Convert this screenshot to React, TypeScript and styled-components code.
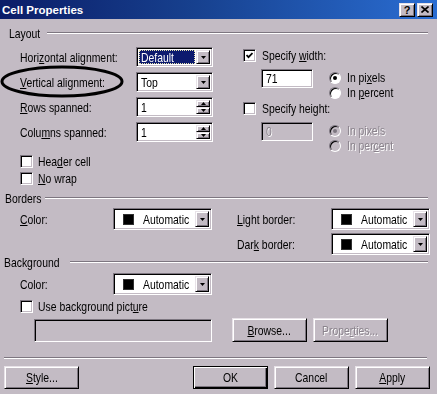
import React from "react";
import styled, { createGlobalStyle, css } from "styled-components";

const BG = "#c3bbc4";
const SHADOW = "#7d7680";
const LIGHT = "#ffffff";
const DIS = "#8a838c";
const FONT = `"Liberation Sans", Arial, sans-serif`;

const Global = createGlobalStyle`
  html, body { margin: 0; padding: 0; background: ${BG}; }
  body { font-family: ${FONT}; font-size: 13px; color: #000; }
  * { box-sizing: border-box; }
`;

const sunken = css`
  border: 1px solid;
  border-color: ${SHADOW} ${LIGHT} ${LIGHT} ${SHADOW};
  box-shadow: inset 1px 1px 0 #000, inset -1px -1px 0 ${BG};
`;

const raised = css`
  background: ${BG};
  border: 1px solid;
  border-color: #e8e2e8 #000 #000 #e8e2e8;
  box-shadow: inset 1px 1px 0 #fff, inset -1px -1px 0 ${SHADOW};
`;

/* The dialog font is a tall, narrow bitmap face: condense the glyphs. */
const Txt = styled.span<{ $disabled?: boolean; $center?: boolean }>`
  display: inline-block;
  white-space: nowrap;
  transform: scaleX(0.8);
  transform-origin: ${(p) => (p.$center ? "center" : "left")} center;
  color: ${(p) => (p.$disabled ? DIS : "inherit")};
  text-shadow: ${(p) => (p.$disabled ? `1px 1px 0 ${LIGHT}` : "none")};
`;

const Window = styled.div`
  position: relative;
  width: 437px;
  height: 394px;
  background: ${BG};
  overflow: hidden;
  display: flex;
  flex-direction: column;
`;

const TitleBar = styled.div`
  height: 19px;
  display: flex;
  align-items: center;
  padding: 0 4px 0 2px;
  background: linear-gradient(90deg, #0b1d68 0%, #17418f 45%, #2a6dd2 100%);
`;

const Title = styled.div`
  flex: 1;
  color: #fff;
  font-family: "Liberation Sans", Arial, sans-serif;
  font-weight: bold;
  font-size: 11.5px;
`;

const CaptionButton = styled.div`
  ${raised};
  width: 16px;
  height: 14px;
  display: flex;
  align-items: center;
  justify-content: center;
  font: bold 11px "Liberation Sans", Arial, sans-serif;
  & + & { margin-left: 2px; }
`;

const Content = styled.div`
  flex: 1;
  display: flex;
  flex-direction: column;
  padding: 0 7px 0 4px;
`;

const SectionHeader = styled.div<{ $indent?: number; $top: number; $line: number }>`
  display: flex;
  align-items: center;
  height: 14px;
  margin-top: ${(p) => p.$top}px;
  padding-left: ${(p) => p.$indent ?? 0}px;
  margin-right: 2px;
  &::after {
    content: "";
    flex: 1;
    height: 0;
    border-top: 1px solid ${SHADOW};
    border-bottom: 1px solid ${LIGHT};
    margin-left: ${(p) => p.$line}px;
  }
`;

const HeaderText = styled(Txt)`
  width: 0;
  overflow: visible;
`;

const Row = styled.div<{ $top?: number; $pl?: number; $align?: string }>`
  display: flex;
  align-items: ${(p) => p.$align ?? "flex-start"};
  margin-top: ${(p) => p.$top ?? 0}px;
  padding-left: ${(p) => p.$pl ?? 0}px;
`;

const Stack = styled.div<{ $gap: number; $top?: number; $left?: number }>`
  display: flex;
  flex-direction: column;
  gap: ${(p) => p.$gap}px;
  margin-top: ${(p) => p.$top ?? 0}px;
  margin-left: ${(p) => p.$left ?? 0}px;
`;

const FieldRow = styled.div<{ $label: number; $h: number }>`
  display: grid;
  grid-template-columns: ${(p) => p.$label}px auto;
  align-items: center;
  height: ${(p) => p.$h}px;
`;

const FieldBox = styled.div<{ $w: number; $h: number; $disabled?: boolean }>`
  ${sunken};
  width: ${(p) => p.$w}px;
  height: ${(p) => p.$h}px;
  background: ${(p) => (p.$disabled ? BG : "#fff")};
  display: flex;
  align-items: stretch;
  padding: 2px;
  flex: none;
`;

const FieldText = styled.div<{ $selected?: boolean }>`
  flex: 1;
  min-width: 0;
  overflow: hidden;
  display: flex;
  align-items: center;
  padding-left: 2px;
  white-space: nowrap;
  background: ${(p) => (p.$selected ? "#0c1a6e" : "transparent")};
  color: ${(p) => (p.$selected ? "#fff" : "#000")};
  outline: ${(p) => (p.$selected ? "1px dotted #e8e4b0" : "none")};
  outline-offset: -1px;
  margin-right: 1px;
`;

const Swatch = styled.span`
  width: 11px;
  height: 11px;
  background: #000;
  border: 1px solid #303030;
  margin: 0 9px 0 5px;
  flex: none;
`;

const DropButton = styled.div`
  ${raised};
  width: 14px;
  flex: none;
  display: flex;
  align-items: center;
  justify-content: center;
`;

const SpinCol = styled.div`
  width: 14px;
  flex: none;
  display: flex;
  flex-direction: column;
`;

const SpinButton = styled.div`
  ${raised};
  flex: 1;
  display: flex;
  align-items: center;
  justify-content: center;
`;

const Arrow = ({ up, w = 5, h = 3 }: { up?: boolean; w?: number; h?: number }) => (
  <svg width={w} height={h} viewBox={`0 0 ${w} ${h}`}>
    <polygon points={up ? `0,${h} ${w},${h} ${w / 2},0` : `0,0 ${w},0 ${w / 2},${h}`} fill="#000" />
  </svg>
);

const CheckBoxBox = styled.span`
  ${sunken};
  width: 13px;
  height: 13px;
  background: #fff;
  display: inline-flex;
  align-items: center;
  justify-content: center;
  flex: none;
`;

const CheckRow = styled.div<{ $gap?: number }>`
  display: flex;
  align-items: center;
  gap: ${(p) => p.$gap ?? 5}px;
  height: 13px;
  white-space: nowrap;
`;

const Check = ({ checked }: { checked?: boolean }) => (
  <CheckBoxBox>
    {checked && (
      <svg width="7" height="7" viewBox="0 0 7 7">
        <path d="M0.5 3 L2.5 5.2 L6.5 1" stroke="#000" strokeWidth="1.8" fill="none" />
      </svg>
    )}
  </CheckBoxBox>
);

const RadioCircle = styled.span<{ $disabled?: boolean }>`
  width: 12px;
  height: 12px;
  border-radius: 50%;
  border: 1px solid;
  border-color: ${SHADOW} ${LIGHT} ${LIGHT} ${SHADOW};
  box-shadow: inset 1px 1px 0 #000;
  background: ${(p) => (p.$disabled ? BG : "#fff")};
  display: inline-flex;
  align-items: center;
  justify-content: center;
  flex: none;
`;

const Dot = styled.span<{ $disabled?: boolean }>`
  width: 4px;
  height: 4px;
  border-radius: 50%;
  background: ${(p) => (p.$disabled ? SHADOW : "#000")};
`;

const RadioItem = styled.div`
  display: flex;
  align-items: center;
  gap: 6px;
  height: 15px;
  white-space: nowrap;
`;

const Radio = ({ checked, disabled, children }: { checked?: boolean; disabled?: boolean; children: React.ReactNode }) => (
  <RadioItem>
    <RadioCircle $disabled={disabled}>{checked && <Dot $disabled={disabled} />}</RadioCircle>
    <Txt $disabled={disabled}>{children}</Txt>
  </RadioItem>
);

const Button = styled.div<{ $default?: boolean; $h?: number }>`
  ${raised};
  width: 75px;
  height: ${(p) => p.$h ?? 23}px;
  flex: none;
  display: flex;
  align-items: center;
  justify-content: center;
  white-space: nowrap;
  ${(p) =>
    p.$default &&
    css`
      border: 1px solid #000;
      box-shadow: inset 1px 1px 0 #fff, inset -1px -1px 0 #000, inset -2px -2px 0 ${SHADOW};
    `}
`;

const Spacer = styled.div`
  flex: 1;
`;

const Separator = styled.div`
  margin-top: 15px;
  margin-right: 3px;
  height: 2px;
  border-top: 1px solid ${SHADOW};
  border-bottom: 1px solid ${LIGHT};
`;

const ButtonBar = styled.div`
  display: flex;
  gap: 6px;
  margin-top: 7px;
`;

const Annotation = styled.svg`
  position: absolute;
  left: 0;
  top: 65px;
  pointer-events: none;
`;

const Select = ({ w, h, children, selected }: { w: number; h: number; children: React.ReactNode; selected?: boolean }) => (
  <FieldBox $w={w} $h={h}>
    <FieldText $selected={selected}>
      <Txt>{children}</Txt>
    </FieldText>
    <DropButton>
      <Arrow />
    </DropButton>
  </FieldBox>
);

const ColorSelect = () => (
  <FieldBox $w={99} $h={22}>
    <FieldText>
      <Swatch />
      <Txt>Automatic</Txt>
    </FieldText>
    <DropButton>
      <Arrow />
    </DropButton>
  </FieldBox>
);

const Spinner = ({ value }: { value: string }) => (
  <FieldBox $w={77} $h={20}>
    <FieldText>
      <Txt>{value}</Txt>
    </FieldText>
    <SpinCol>
      <SpinButton>
        <Arrow up />
      </SpinButton>
      <SpinButton>
        <Arrow />
      </SpinButton>
    </SpinCol>
  </FieldBox>
);

export default function App() {
  return (
    <>
      <Global />
      <Window>
        <TitleBar>
          <Title>Cell Properties</Title>
          <CaptionButton>?</CaptionButton>
          <CaptionButton>
            <svg width="8" height="7" viewBox="0 0 8 7">
              <path d="M0.5 0.5 L7.5 6.5 M7.5 0.5 L0.5 6.5" stroke="#000" strokeWidth="1.6" />
            </svg>
          </CaptionButton>
        </TitleBar>
        <Content>
          <SectionHeader $indent={5} $top={7} $line={38}>
            <HeaderText>Layout</HeaderText>
          </SectionHeader>
          <Row $top={7}>
            <Stack $gap={0}>
              <Stack $gap={5} $left={16}>
                <FieldRow $label={116} $h={20}>
                  <Txt>
                    Hori<u>z</u>ontal alignment:
                  </Txt>
                  <Select w={77} h={20} selected>
                    Default
                  </Select>
                </FieldRow>
                <FieldRow $label={116} $h={20}>
                  <Txt>
                    <u>V</u>ertical alignment:
                  </Txt>
                  <Select w={77} h={20}>
                    Top
                  </Select>
                </FieldRow>
                <FieldRow $label={116} $h={20}>
                  <Txt>
                    <u>R</u>ows spanned:
                  </Txt>
                  <Spinner value="1" />
                </FieldRow>
                <FieldRow $label={116} $h={20}>
                  <Txt>
                    Colu<u>m</u>ns spanned:
                  </Txt>
                  <Spinner value="1" />
                </FieldRow>
              </Stack>
              <Stack $gap={4} $top={13} $left={16}>
                <CheckRow>
                  <Check />
                  <Txt>
                    Hea<u>d</u>er cell
                  </Txt>
                </CheckRow>
                <CheckRow>
                  <Check />
                  <Txt>
                    <u>N</u>o wrap
                  </Txt>
                </CheckRow>
              </Stack>
            </Stack>
            <Stack $gap={0} $top={2} $left={30}>
              <CheckRow $gap={6}>
                <Check checked />
                <Txt>
                  Specify <u>w</u>idth:
                </Txt>
              </CheckRow>
              <Row $top={7} $pl={18}>
                <FieldBox $w={52} $h={19}>
                  <FieldText>
                    <Txt>71</Txt>
                  </FieldText>
                </FieldBox>
                <Stack $gap={0} $left={16} $top={1}>
                  <Radio checked>
                    In pi<u>x</u>els
                  </Radio>
                  <Radio>
                    In <u>p</u>ercent
                  </Radio>
                </Stack>
              </Row>
              <Stack $gap={0} $top={2}>
                <CheckRow $gap={6}>
                  <Check />
                  <Txt>Specify height:</Txt>
                </CheckRow>
              </Stack>
              <Row $top={7} $pl={18}>
                <FieldBox $w={52} $h={19} $disabled>
                  <FieldText>
                    <Txt $disabled>0</Txt>
                  </FieldText>
                </FieldBox>
                <Stack $gap={0} $left={16} $top={1}>
                  <Radio checked disabled>
                    In pixels
                  </Radio>
                  <Radio disabled>
                    In per<u>c</u>ent
                  </Radio>
                </Stack>
              </Row>
            </Stack>
          </Row>

          <SectionHeader $indent={1} $top={6} $line={40}>
            <HeaderText>Borders</HeaderText>
          </SectionHeader>
          <Row $top={3} $pl={16}>
            <FieldRow $label={93} $h={22}>
              <Txt>
                <u>C</u>olor:
              </Txt>
              <ColorSelect />
            </FieldRow>
            <Stack $gap={3} $left={25}>
              <FieldRow $label={94} $h={22}>
                <Txt>
                  <u>L</u>ight border:
                </Txt>
                <ColorSelect />
              </FieldRow>
              <FieldRow $label={94} $h={22}>
                <Txt>
                  Dar<u>k</u> border:
                </Txt>
                <ColorSelect />
              </FieldRow>
            </Stack>
          </Row>

          <SectionHeader $top={0} $line={66}>
            <HeaderText>Background</HeaderText>
          </SectionHeader>
          <Row $top={4} $pl={16}>
            <FieldRow $label={93} $h={22}>
              <Txt>Color:</Txt>
              <ColorSelect />
            </FieldRow>
          </Row>
          <Row $top={5} $pl={16}>
            <CheckRow>
              <Check />
              <Txt>
                Use background pict<u>u</u>re
              </Txt>
            </CheckRow>
          </Row>
          <Row $top={5} $pl={30} $align="center">
            <FieldBox $w={178} $h={23} $disabled />
            <Stack $gap={0} $left={20}>
              <Button $h={24}>
                <Txt $center>
                  <u>B</u>rowse...
                </Txt>
              </Button>
            </Stack>
            <Stack $gap={0} $left={6}>
              <Button $h={24}>
                <Txt $center $disabled>
                  Prope<u>r</u>ties...
                </Txt>
              </Button>
            </Stack>
          </Row>

          <Separator />
          <ButtonBar>
            <Button>
              <Txt $center>
                <u>S</u>tyle...
              </Txt>
            </Button>
            <Spacer />
            <Button $default>
              <Txt $center>OK</Txt>
            </Button>
            <Button>
              <Txt $center>Cancel</Txt>
            </Button>
            <Button>
              <Txt $center>
                <u>A</u>pply
              </Txt>
            </Button>
          </ButtonBar>
        </Content>
        <Annotation width="126" height="34" viewBox="0 0 126 34">
          <ellipse cx="62" cy="16.5" rx="60" ry="14.5" fill="none" stroke="#000" strokeWidth="3" />
        </Annotation>
      </Window>
    </>
  );
}
